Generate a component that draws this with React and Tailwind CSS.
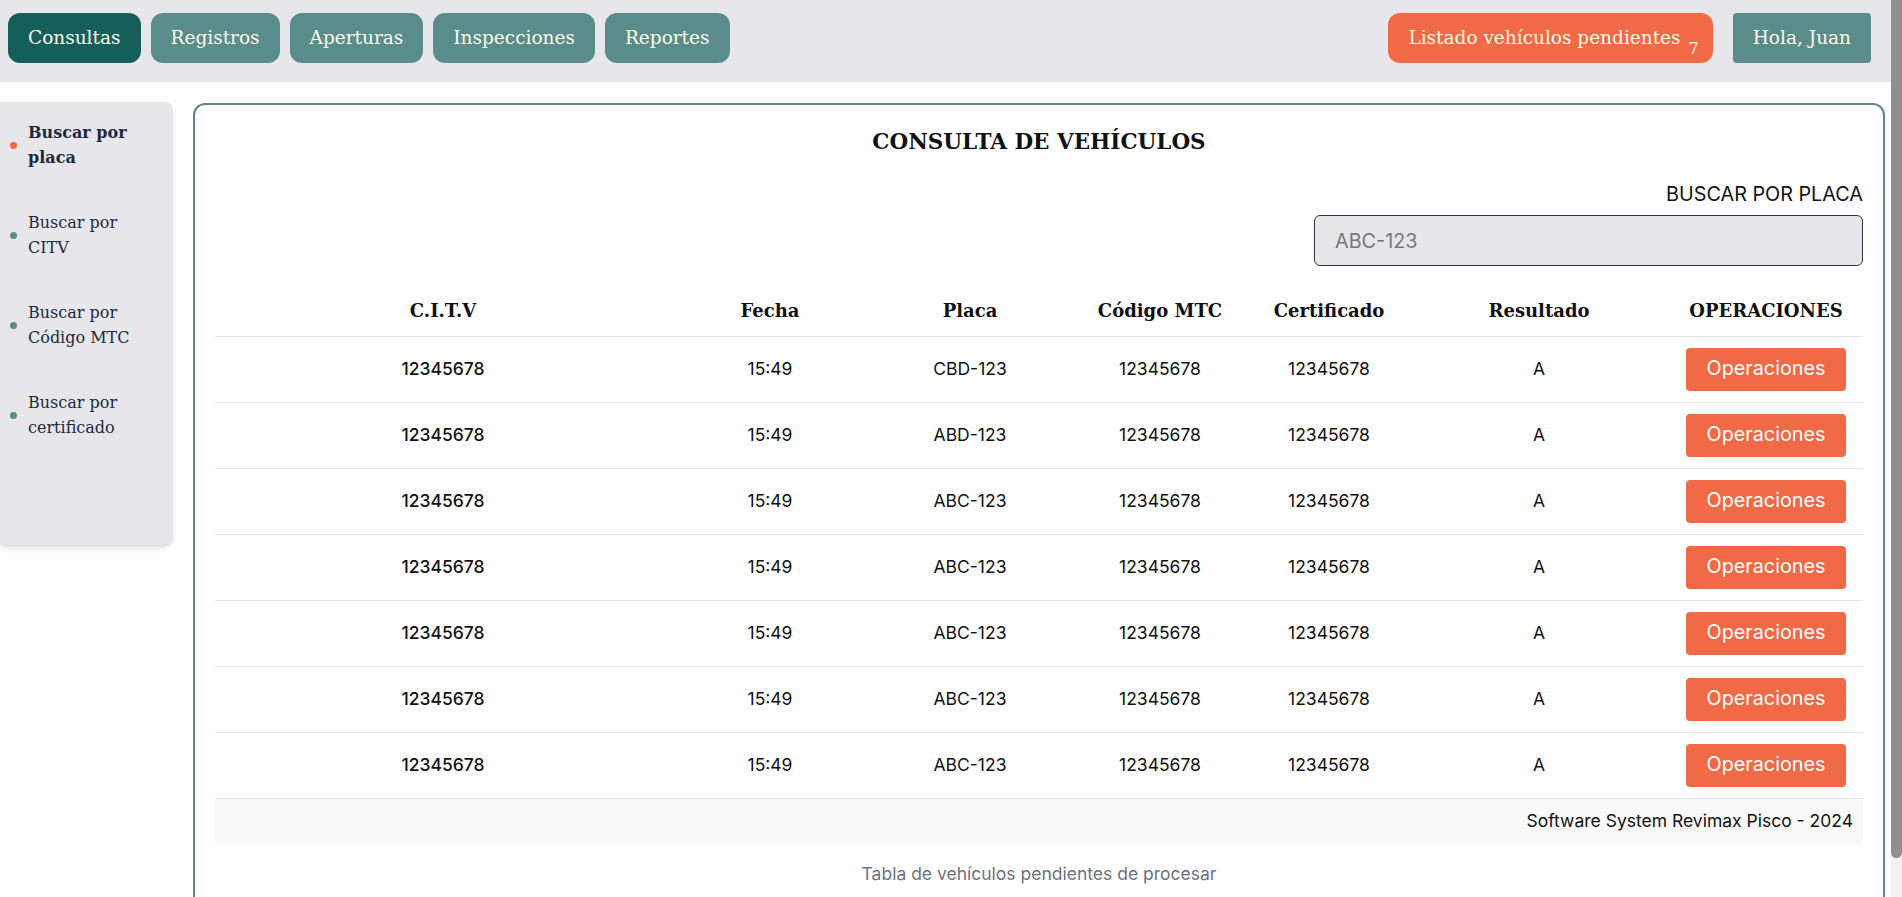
import React from "react";

const serif = "font-['DejaVu_Serif',serif]";
const sans = "font-['Inter',sans-serif]";

const navItems = ["Consultas", "Registros", "Aperturas", "Inspecciones", "Reportes"];

const sideItems = [
  { l1: "Buscar por", l2: "placa", active: true },
  { l1: "Buscar por", l2: "CITV" },
  { l1: "Buscar por", l2: "Código MTC" },
  { l1: "Buscar por", l2: "certificado" },
];

const rows = [
  { citv: "12345678", fecha: "15:49", placa: "CBD-123", mtc: "12345678", cert: "12345678", res: "A" },
  { citv: "12345678", fecha: "15:49", placa: "ABD-123", mtc: "12345678", cert: "12345678", res: "A" },
  { citv: "12345678", fecha: "15:49", placa: "ABC-123", mtc: "12345678", cert: "12345678", res: "A" },
  { citv: "12345678", fecha: "15:49", placa: "ABC-123", mtc: "12345678", cert: "12345678", res: "A" },
  { citv: "12345678", fecha: "15:49", placa: "ABC-123", mtc: "12345678", cert: "12345678", res: "A" },
  { citv: "12345678", fecha: "15:49", placa: "ABC-123", mtc: "12345678", cert: "12345678", res: "A" },
  { citv: "12345678", fecha: "15:49", placa: "ABC-123", mtc: "12345678", cert: "12345678", res: "A" },
];

const headers = ["C.I.T.V", "Fecha", "Placa", "Código MTC", "Certificado", "Resultado", "OPERACIONES"];

export default function App() {
  return (
    <div className={`flex items-start min-h-screen bg-white ${sans}`}>
      <div className="flex-1 min-w-0">
        {/* Top nav */}
        <div className="h-[82px] bg-[#e6e6eb] flex items-start justify-between pt-[13px] pl-2 pr-5">
          <div className="flex gap-[10px]">
            {navItems.map((n, i) => (
              <button
                key={n}
                className={`h-[50px] px-5 rounded-xl text-[18.5px] text-[#fdf8ea] ${serif} ${
                  i === 0 ? "bg-[#145f5a]" : "bg-[#5a8c89]"
                }`}
              >
                {n}
              </button>
            ))}
          </div>
          <div className="flex gap-5">
            <button className={`h-[50px] pl-5 pr-[14px] rounded-xl bg-[#ef6a45] text-[18.5px] text-[#fdf8ea] ${serif}`}>
              Listado vehículos pendientes
              <span className="relative top-[10px] ml-[8px] text-[16px]">7</span>
            </button>
            <button className={`h-[50px] px-5 rounded bg-[#5a8c89] text-[18.5px] text-[#fdf8ea] ${serif}`}>
              Hola, Juan
            </button>
          </div>
        </div>

        <div className="flex gap-5 mt-5 items-start">
          {/* Sidebar */}
          <div className="w-[173px] h-[443px] shrink-0 bg-[#e6e6eb] rounded-r-lg shadow-md pt-[18px] flex flex-col gap-10">
            {sideItems.map((s) => (
              <div key={s.l2} className="flex items-center">
                <span
                  className={`ml-[10px] w-[7px] h-[7px] rounded-full shrink-0 ${
                    s.active ? "bg-[#ef6a45]" : "bg-[#5a8c89]"
                  }`}
                />
                <div
                  className={`ml-[11px] text-[16px] leading-[25px] text-[#1e2a3b] ${serif} ${
                    s.active ? "font-bold" : ""
                  }`}
                >
                  <div>{s.l1}</div>
                  <div>{s.l2}</div>
                </div>
              </div>
            ))}
          </div>

          {/* Main card */}
          <div className="flex-1 mr-[6px] mt-px border-2 border-[#5f8a82] rounded-xl px-5 pt-5 pb-10">
            <h1 className={`text-center text-[21.5px] leading-[34px] font-bold text-[#111] ${serif}`}>
              CONSULTA DE VEHÍCULOS
            </h1>

            <div className="flex flex-col items-end mt-[21px]">
              <label className="text-[19.8px] leading-[28px] text-[#111]">BUSCAR POR PLACA</label>
              <input
                placeholder="ABC-123"
                className="mt-[7px] w-[549px] h-[51px] bg-[#e6e6eb] border border-[#2b3440] rounded-md px-5 text-[19.8px] placeholder:text-[#777]"
              />
            </div>

            <table className="w-full table-fixed mt-5">
              <colgroup>
                <col className="w-[456px]" />
                <col className="w-[198px]" />
                <col className="w-[202px]" />
                <col className="w-[178px]" />
                <col className="w-[160px]" />
                <col className="w-[260px]" />
                <col className="w-[194px]" />
              </colgroup>
              <thead>
                <tr className="h-[50px] border-b border-gray-200">
                  {headers.map((h) => (
                    <th key={h} className={`text-[18px] font-bold text-[#111] ${serif}`}>
                      {h}
                    </th>
                  ))}
                </tr>
              </thead>
              <tbody>
                {rows.map((r, i) => (
                  <tr key={i} className="h-[66px] border-b border-gray-200 text-[17.5px] text-[#111] text-center">
                    <td className="font-medium">{r.citv}</td>
                    <td>{r.fecha}</td>
                    <td>{r.placa}</td>
                    <td>{r.mtc}</td>
                    <td>{r.cert}</td>
                    <td>{r.res}</td>
                    <td>
                      <button className="w-[160px] h-[43px] rounded bg-[#ef6a45] text-white text-[19.8px]">
                        Operaciones
                      </button>
                    </td>
                  </tr>
                ))}
              </tbody>
              <tfoot>
                <tr className="h-[46px] bg-[#f9f9f9]">
                  <td colSpan={7} className="text-right pr-[10px] text-[17.5px] text-[#111]">
                    Software System Revimax Pisco - 2024
                  </td>
                </tr>
              </tfoot>
              <caption className="caption-bottom pt-4 text-[17.5px] leading-[28px] text-[#6b7280]">
                Tabla de vehículos pendientes de procesar
              </caption>
            </table>
          </div>
        </div>
      </div>

      {/* page scrollbar */}
      <div className="w-[11px] h-screen sticky top-0 shrink-0 bg-[#f1f1f1]">
        <div className="h-[858px] bg-[#8f8f8f] rounded-b-full" />
      </div>
    </div>
  );
}
